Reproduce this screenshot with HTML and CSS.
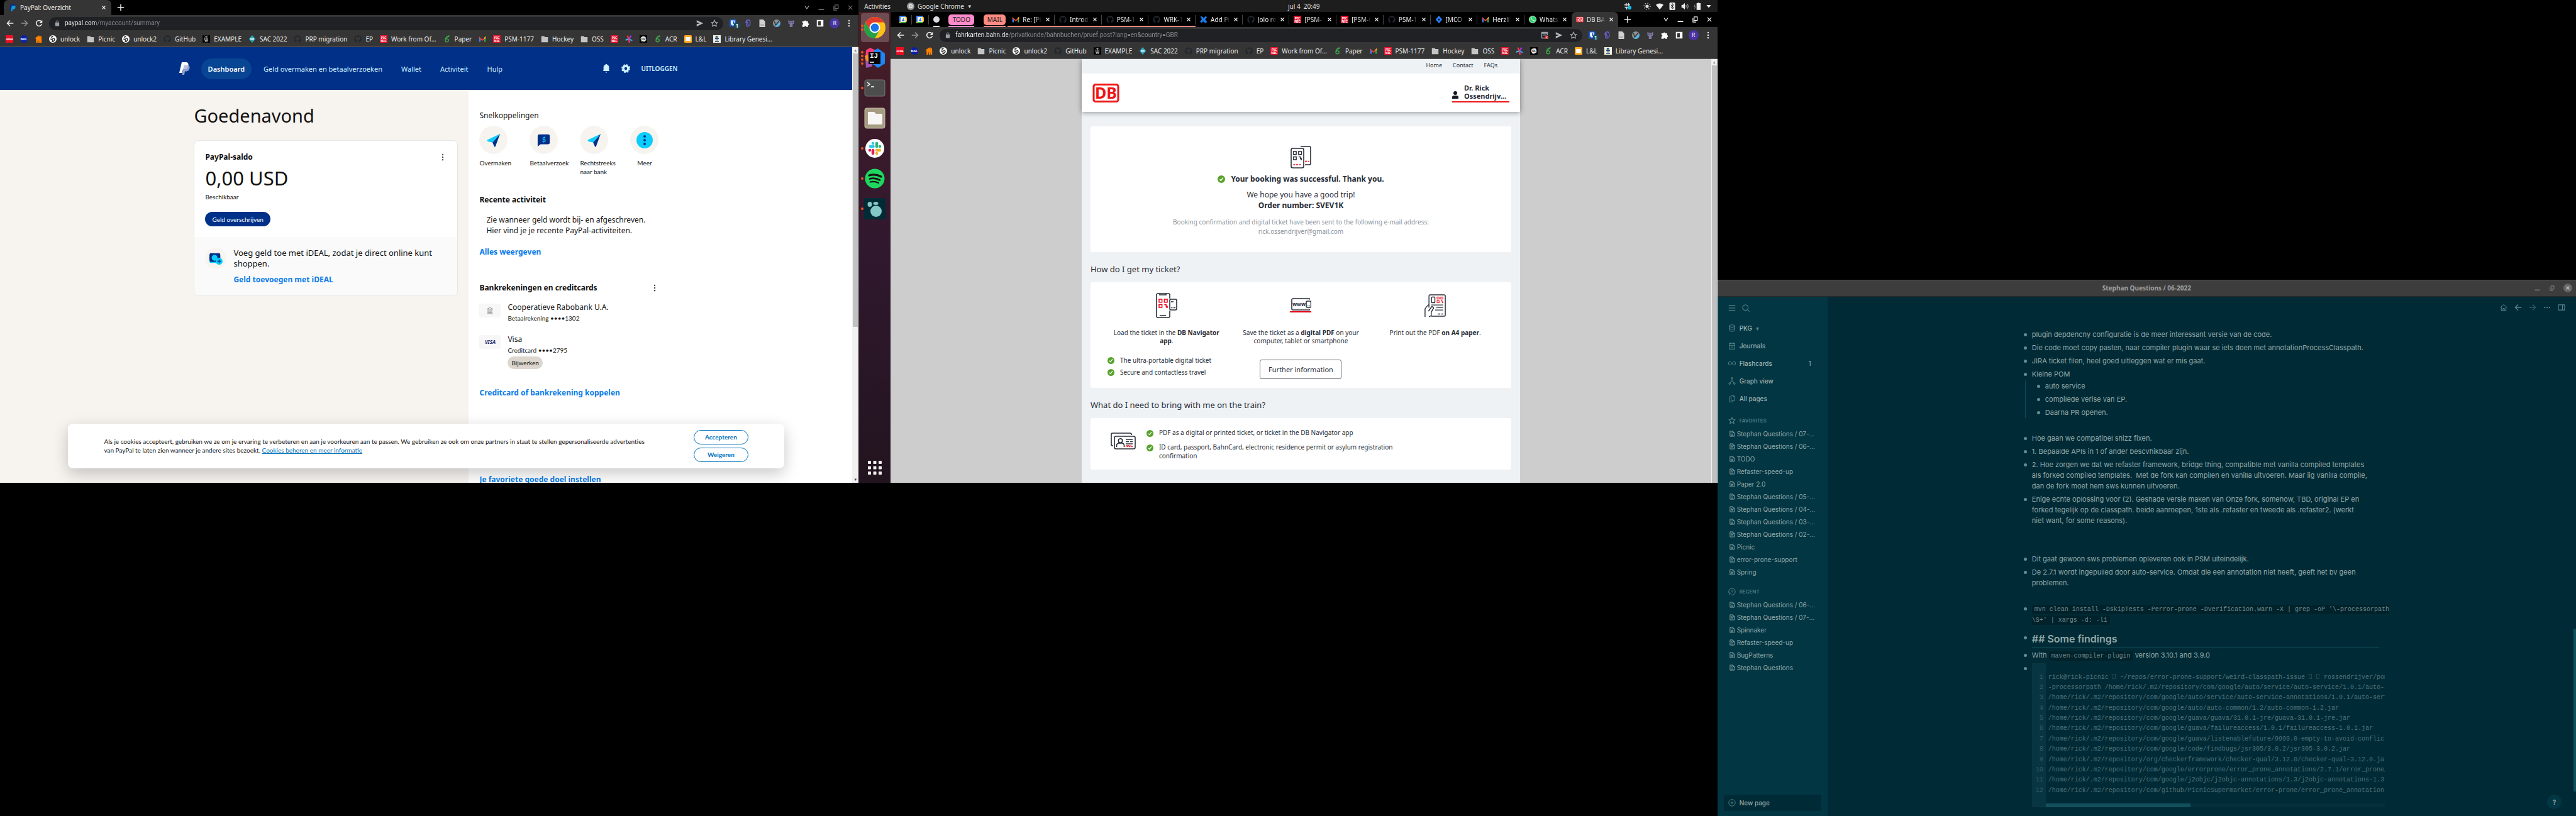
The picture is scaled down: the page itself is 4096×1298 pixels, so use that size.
FILE: index.html
```html
<!DOCTYPE html>
<html lang="nl">
<head>
<meta charset="utf-8">
<title>Desktop</title>
<link rel="stylesheet" href="styles.css">
</head>
<body>
<svg class="sprite" aria-hidden="true">
  <symbol id="back" viewBox="0 0 16 16"><path d="M15 8H2M8 2L2 8l6 6" fill="none" stroke="currentColor" stroke-width="2"/></symbol>
  <symbol id="forward" viewBox="0 0 16 16"><path d="M1 8h13M8 2l6 6-6 6" fill="none" stroke="currentColor" stroke-width="2"/></symbol>
  <symbol id="reload" viewBox="0 0 16 16"><path d="M13 4.2A6 6 0 1 0 14 9.5" fill="none" stroke="currentColor" stroke-width="2"/><path d="M15 1v6.5H8.5z" fill="currentColor"/></symbol>
  <symbol id="lock" viewBox="0 0 16 16"><rect x="3" y="6" width="10" height="9" rx="1" fill="currentColor"/><path d="M5 7V4.5a3 3 0 0 1 6 0V7" fill="none" stroke="currentColor" stroke-width="1.5"/></symbol>
  <symbol id="send" viewBox="0 0 16 16"><path d="M1 1.5L15 8 1 14.5V10l7-2-7-2z" fill="currentColor"/></symbol>
  <symbol id="star" viewBox="0 0 16 16"><path d="M8 1.5l2 4.4 4.7.5-3.5 3.2 1 4.8L8 12l-4.200 2.400 1-4.800L1.300 6.400 6 5.900z" fill="none" stroke="currentColor" stroke-width="1.400"/></symbol>
  <symbol id="popup" viewBox="0 0 16 16"><path d="M9 14H2V2h12v6M2 4h12M5 7.500h7" fill="none" stroke="#9aa0a6" stroke-width="2"/><rect x="9" y="9" width="7" height="7" fill="#e0403a"/><path d="M11 11l3 3m0-3l-3 3" stroke="#fff"/></symbol>
  <symbol id="bitwarden" viewBox="0 0 16 16"><rect width="14" height="15" rx="2" fill="#175ddc"/><path d="M3 2h8v6c0 3-2 4-4 5-2-1-4-2-4-5z" fill="#fff"/><path d="M7 3.500h2.500V8c0 1.500-1 2.500-2.500 3.500z" fill="#175ddc"/></symbol>
  <symbol id="clip" viewBox="0 0 16 16"><path d="M4 8V5.500a4.500 4.500 0 0 1 9 0V10a2.500 2.500 0 0 1-5 0V6.500a1.500 1.500 0 0 0-3 0v4.500a4 4 0 0 0 4 4" fill="none" stroke="#6a63d8" stroke-width="1.700"/></symbol>
  <symbol id="doc" viewBox="0 0 16 16"><path d="M2 0h8l4 4v12H2z" fill="#d0d0d0"/><path d="M4 10h8M4 12.500h8" stroke="#999"/></symbol>
  <symbol id="vim" viewBox="0 0 16 16"><circle cx="8" cy="8" r="8" fill="#8d9498"/><path d="M15 5a8 8 0 0 1-11 10z" fill="#4fb3e8"/><path d="M3 4l3 8L13 3" stroke="#333" stroke-width="2" fill="none"/></symbol>
  <symbol id="cat" viewBox="0 0 16 16"><path d="M2 1l3 2h6l3-2v6c0 2-2 3-3 3v6H5v-6C4 10 2 9 2 7z" fill="#8076a3"/><circle cx="5.500" cy="6" r="1.200" fill="#40395c"/><circle cx="10.500" cy="6" r="1.200" fill="#40395c"/></symbol>
  <symbol id="puzzle" viewBox="0 0 16 16"><path d="M1 4h4a2 2 0 1 1 4 0h4v4a2 2 0 1 1 0 4v3.500H9.500a2 2 0 1 0-4 0H1V11a2 2 0 1 0 0-4z" fill="#fff"/></symbol>
  <symbol id="panel" viewBox="0 0 16 16"><path d="M1 1h14v14H1z" fill="#fff"/><path d="M3.500 3.500h6v9h-6z" fill="#353535"/></symbol>
  <symbol id="menu" viewBox="0 0 16 16"><g fill="currentColor"><circle cx="8" cy="2.500" r="1.600"/><circle cx="8" cy="8" r="1.600"/><circle cx="8" cy="13.500" r="1.600"/></g></symbol>
  <symbol id="chevron" viewBox="0 0 16 16"><path d="M3 4l5 7 5-7" fill="none" stroke="currentColor" stroke-width="2"/></symbol>
  <symbol id="minimize" viewBox="0 0 16 16"><path d="M1 13h14" stroke="currentColor" stroke-width="3"/></symbol>
  <symbol id="restore" viewBox="0 0 16 16"><path d="M6 1.500h8v9H6zM3 4.500v10h8" fill="none" stroke="currentColor" stroke-width="2"/></symbol>
  <symbol id="close" viewBox="0 0 16 16"><path d="M3 3l10 10M13 3L3 13" stroke="currentColor" stroke-width="2.200"/></symbol>
  <symbol id="plus" viewBox="0 0 16 16"><path d="M8 1v14M1 8h14" stroke="currentColor" stroke-width="2"/></symbol>
  <symbol id="paypal-mark" viewBox="0 0 16 16"><path d="M4 0h6c3 0 4 2 3.500 4.500C13 8 10.500 9 8 9H6l-1 5H1.500z" fill="#0a2f86"/><path d="M6.500 4H12c2 .5 2.500 2 2 4-.500 3-2.500 4-5 4H8l-.800 4H4.500z" fill="#159bd7"/></symbol>
  <symbol id="hema" viewBox="0 0 16 16"><path d="M0 0h16v16H0z" fill="#f00d22"/><text x="8" y="10" font-size="5" font-weight="700" text-anchor="middle" fill="#fff">HEMA</text></symbol>
  <symbol id="bol" viewBox="0 0 16 16"><circle cx="8" cy="8" r="8" fill="#0a1fa8"/><text x="8" y="11" font-size="8" font-weight="700" text-anchor="middle" fill="#fff">bol.</text></symbol>
  <symbol id="fork" viewBox="0 0 16 16"><path d="M1 6l6-4 2-2v3l2-3v3l3-2 1 6v9h-3V9l-1 7H8L7 9l-1 7H3V8z" fill="#ff8000"/></symbol>
  <symbol id="globe" viewBox="0 0 16 16"><circle cx="8" cy="8" r="8" fill="#fff"/><path d="M9 1.500L5 4l2 2.500 4 .5 1 3-3.500 4-1.500-.500.500-4L3 8" fill="none" stroke="#353535" stroke-width="2"/></symbol>
  <symbol id="folder" viewBox="0 0 16 16"><path d="M1 2h6l1.500 2H15v11H1z" fill="#c4c4c4"/></symbol>
  <symbol id="github" viewBox="0 0 16 16"><path d="M8 .5a7.500 7.500 0 0 0-2.400 14.600c.4 0 .5-.2.500-.400v-1.500c-2 .4-2.600-.8-2.800-1.500 1 .5 1.500.7 2.800.3.100-.6.300-.900.600-1.200-2-.200-3.500-1-3.500-3.700 0-.800.300-1.500.800-2-.100-.500-.200-1.200.100-2 .8 0 1.500.4 2.100.8a7 7 0 0 1 3.700 0c.6-.4 1.300-.8 2.100-.8.300.8.200 1.500.100 2 .5.500.8 1.200.8 2 0 2.700-1.600 3.500-3.500 3.700.4.400.600.900.600 1.700v2.200c0 .2.100.4.500.400A7.500 7.500 0 0 0 8 .5z" fill="#22272e"/></symbol>
  <symbol id="example" viewBox="0 0 16 16"><path d="M0 0h16v16H0z" fill="#050505"/><path d="M5 1l3 3 3-3M5 5v6h6V5M5 15l3-3 3 3M8 4v6" fill="none" stroke="#ddd" stroke-width="1.300"/></symbol>
  <symbol id="sac" viewBox="0 0 16 16"><path d="M8 0l7 8-7 8-7-8z" fill="#2aa3b8"/><path d="M4 6h8v4H4z" fill="#bfe6ee"/></symbol>
  <symbol id="picnic" viewBox="0 0 16 16"><path d="M0 0h16v16H0z" fill="#e8102c"/><text x="8" y="7.500" font-size="7" font-weight="700" text-anchor="middle" fill="#fff">PIC</text><text x="8" y="14" font-size="7" font-weight="700" text-anchor="middle" fill="#fff">NIC</text></symbol>
  <symbol id="overleaf" viewBox="0 0 16 16"><path d="M13 1C7 2 4 6 4 11a3.500 3.500 0 1 0 4-3.500C6 7 5 9 4.500 10M7 4l5-1" fill="none" stroke="#3da24a" stroke-width="2"/></symbol>
  <symbol id="gmail" viewBox="0 0 16 16"><path d="M1 3v11h3V7z" fill="#4285f4"/><path d="M15 3v11h-3V7z" fill="#34a853"/><path d="M1 3l7 6 7-6v3l-7 6-7-6z" fill="#ea4335"/><path d="M12 5l3-3v4l-3 2z" fill="#fbbc04"/></symbol>
  <symbol id="burst" viewBox="0 0 16 16"><g stroke-width="3" stroke-linecap="round"><path d="M8 8L5 2" stroke="#f33"/><path d="M8 8l4-6" stroke="#a3f"/><path d="M8 8l6 3" stroke="#39f"/><path d="M8 8L2 10" stroke="#2cf"/><path d="M8 8l1 7" stroke="#f36"/></g></symbol>
  <symbol id="ol" viewBox="0 0 16 16"><path d="M0 0h16v16H0z" fill="#050505"/><circle cx="8" cy="8" r="5" fill="#eee" stroke="#eee" stroke-dasharray="1.500 1" stroke-width="2"/><text x="8" y="10.500" font-size="6" font-weight="700" text-anchor="middle" fill="#111">OL</text></symbol>
  <symbol id="slides" viewBox="0 0 16 16"><rect width="16" height="16" rx="2" fill="#ffac28"/><path d="M3 4h10v8H3z" fill="#fff"/></symbol>
  <symbol id="libgen" viewBox="0 0 16 16"><path d="M0 0h16v16H0z" fill="#f1f0df"/><path d="M5 2h5v3H5zM4 6h8v2H4zM5 9h6v2H5zM4 12h8v2H4z" fill="#1b3f78"/></symbol>
  <symbol id="calendar" viewBox="0 0 16 16"><path d="M0 0h12l4 4v8l-4 4H0z" fill="#fbbc04"/><path d="M0 0h13v3H3v10H0z" fill="#4285f4"/><path d="M3 13h10v3H3z" fill="#34a853"/><path d="M3 3h10v10H3z" fill="#fff"/><text x="8" y="12" font-size="10" font-weight="700" text-anchor="middle" fill="#1a73e8">4</text></symbol>
  <symbol id="confluence" viewBox="0 0 16 16"><path d="M1 1l4 1 3 3 4-4 3 2-4 5 4 5-3 3-5-4-4 3-3-3 4-4z" fill="#1f7cf0"/></symbol>
  <symbol id="jira" viewBox="0 0 16 16"><path d="M8 0l7 8-7 8-7-8z" fill="#2684ff"/><path d="M8 5.500L10.500 8 8 10.500 5.500 8z" fill="#050505"/></symbol>
  <symbol id="whatsapp" viewBox="0 0 16 16"><circle cx="8" cy="8" r="7.300" fill="#25d366" stroke="#fff" stroke-width="1.200"/><path d="M5 4c-1 2 2 7 6 7.500l1-2-2-1-1 1C8 9 6.500 7.500 6.300 6.500l.8-1L6.500 4z" fill="#fff"/></symbol>
  <symbol id="db" viewBox="0 0 42 30"><rect x="1.500" y="1.500" width="39" height="27" rx="3" fill="#fff" stroke="#f01414" stroke-width="3"/><text x="21" y="24" font-size="25" font-weight="700" text-anchor="middle" fill="#f01414">DB</text></symbol>
  <symbol id="check" viewBox="0 0 16 16"><circle cx="8" cy="8" r="8" fill="#57a22b"/><path d="M4.500 8.500L7 11l4.500-6" fill="none" stroke="#fff" stroke-width="2"/></symbol>
  <symbol id="page" viewBox="0 0 16 16"><path d="M3 1.500h7l4 4v9H3zM10 1.500v4h4M5.500 8.500h6M5.500 11.500h6M5.500 5.500h2" fill="none" stroke="currentColor" stroke-width="1.500"/></symbol>
  <symbol id="plane" viewBox="0 0 24 24"><path d="M23 1L1 11.500C0 12 1 14 2.500 14.500L10 16z" fill="#0ccdfb"/><path d="M23 1L10 16l3 7c.600 1 1.400 1 2 0z" fill="#012f86"/></symbol>
  <symbol id="qr" viewBox="0 0 16 16"><path d="M1 1h5v5H1zM10 1h5v5h-5zM1 10h5v5H1zM10 10h3v3h2v2h-2" fill="none" stroke="currentColor" stroke-width="1.600"/></symbol>
</svg>

<main class="desktop">

<section class="screen">
  <div class="browser inactive">
    <header class="tabstrip">
      <a class="tab tab-wide active" href="#"><svg><use href="#paypal-mark"/></svg><span>PayPal: Overzicht</span><svg class="x"><use href="#close"/></svg></a>
      <button class="newtab" aria-label="Nieuw tabblad"><svg><use href="#plus"/></svg></button>
      <div class="wincontrols"><svg class="bright"><use href="#chevron"/></svg><svg><use href="#minimize"/></svg><svg><use href="#restore"/></svg><svg><use href="#close"/></svg></div>
    </header>
    <div class="toolbar">
      <div class="navbuttons"><svg><use href="#back"/></svg><svg class="off"><use href="#forward"/></svg><svg><use href="#reload"/></svg></div>
      <label class="omnibox"><svg><use href="#lock"/></svg><input class="url url-short" aria-label="Adres" value="paypal.com/myaccount/summary"><svg class="act"><use href="#send"/></svg><svg class="act"><use href="#star"/></svg></label>
      <div class="extensions"><span class="ext-badged"><svg><use href="#bitwarden"/></svg><b>1</b></span><svg><use href="#clip"/></svg><svg><use href="#doc"/></svg><svg><use href="#vim"/></svg><svg><use href="#cat"/></svg><svg><use href="#puzzle"/></svg><svg><use href="#panel"/></svg><span class="avatar">R</span><svg><use href="#menu"/></svg></div>
    </div>
    <nav class="bookmarks">
      <a href="#" aria-label="HEMA"><svg><use href="#hema"/></svg></a><a href="#" aria-label="bol"><svg><use href="#bol"/></svg></a><a href="#" aria-label="Thuisbezorgd"><svg><use href="#fork"/></svg></a><a href="#"><svg><use href="#globe"/></svg>unlock</a><a href="#"><svg><use href="#folder"/></svg>Picnic</a><a href="#"><svg><use href="#globe"/></svg>unlock2</a><a href="#"><svg><use href="#github"/></svg>GitHub</a><a href="#"><svg><use href="#example"/></svg>EXAMPLE</a><a href="#"><svg><use href="#sac"/></svg>SAC 2022</a><a href="#"><svg><use href="#github"/></svg>PRP migration</a><a href="#"><svg><use href="#github"/></svg>EP</a><a href="#"><svg><use href="#picnic"/></svg>Work from Of…</a><a href="#"><svg><use href="#overleaf"/></svg>Paper</a><a href="#" aria-label="Gmail"><svg><use href="#gmail"/></svg></a><a href="#"><svg><use href="#picnic"/></svg>PSM-1177</a><a href="#"><svg><use href="#folder"/></svg>Hockey</a><a href="#"><svg><use href="#folder"/></svg>OSS</a><a href="#" aria-label="Picnic"><svg><use href="#picnic"/></svg></a><a href="#" aria-label="Burst"><svg><use href="#burst"/></svg></a><a href="#" aria-label="OL"><svg><use href="#ol"/></svg></a><a href="#"><svg><use href="#overleaf"/></svg>ACR</a><a href="#"><svg><use href="#slides"/></svg>L&amp;L</a><a href="#"><svg><use href="#libgen"/></svg>Library Genesi…</a>
    </nav>
    <div class="viewport">
      <div class="paypal">
        <header class="pp-header">
          <svg class="pp-logo" viewBox="0 0 17 20"><path d="M4 0h6c4 0 5 2 4.500 5.500C14 9 11.500 11 8 11H6l-1.500 6H0z" fill="#fff"/><path d="M7.500 4.500h5C16 5 17 7 16.500 9.500c-.500 3-3 5-6 5H9L8 20H4.500z" fill="#a9b7dc" fill-opacity=".85"/></svg>
          <nav class="pp-nav"><a class="on" href="#">Dashboard</a><a href="#">Geld overmaken en betaalverzoeken</a><a href="#">Wallet</a><a href="#">Activiteit</a><a href="#">Hulp</a></nav>
          <div class="pp-tools">
            <svg viewBox="0 0 14 16"><path d="M2 11.500V6a5 5 0 0 1 3.500-5 1.500 1.500 0 0 1 3 0A5 5 0 0 1 12 6v5.500l1 1H1zM5 14h4l-2 2z" fill="#cdf1ff"/></svg>
            <svg viewBox="0 0 16 16"><circle cx="8" cy="8" r="4.500" fill="none" stroke="#cdf1ff" stroke-width="4"/><circle cx="8" cy="8" r="7" fill="none" stroke="#cdf1ff" stroke-width="2" stroke-dasharray="3.200 2.300"/></svg>
            <a href="#">UITLOGGEN</a>
          </div>
        </header>
        <div class="pp-body">
          <section class="pp-left">
            <h1>Goedenavond</h1>
            <article class="pp-card">
              <div class="pp-balance">
                <div class="pp-row"><h2>PayPal-saldo</h2><button class="dots" aria-label="Meer opties"><svg><use href="#menu"/></svg></button></div>
                <p class="pp-amount">0,00 USD</p>
                <p class="pp-small">Beschikbaar</p>
                <button class="pp-primary">Geld overschrijven</button>
              </div>
              <div class="pp-ideal">
                <span class="pp-disc"><svg viewBox="0 0 24 24"><path d="M3 4h16v16H3c-1.500 0-2-3-2-8s.5-8 2-8z" fill="#0ccdfb"/><path d="M3 3h15c2 0 2 3 2 7s0 8-2 8H3c-1.500 0-2-4-2-8s.5-7 2-7z" fill="#012f86"/><circle cx="10" cy="11" r="5" fill="#0ccdfb"/><circle cx="18" cy="17" r="6" fill="#0ccdfb"/><path d="M18 14v6M15 17h6" stroke="#012f86" stroke-width="1.600"/></svg></span>
                <div><p>Voeg geld toe met iDEAL, zodat je direct online kunt<br>shoppen.</p><a class="pp-link" href="#">Geld toevoegen met iDEAL</a></div>
              </div>
            </article>
          </section>
          <aside class="pp-right">
            <h2 class="plain">Snelkoppelingen</h2>
            <div class="pp-quick">
              <a href="#"><span><svg><use href="#plane"/></svg></span>Overmaken</a>
              <a href="#"><span><svg viewBox="0 0 24 24"><path d="M4 2h15a3 3 0 0 1 3 3v11a3 3 0 0 1-3 3H6l-5 4V5a3 3 0 0 1 3-3z" fill="#012f86"/><text x="12" y="15" font-size="12" text-anchor="middle" fill="#0ccdfb">$</text></svg></span>Betaalverzoek</a>
              <a href="#"><span><svg><use href="#plane"/></svg></span>Rechtstreeks<br>naar bank</a>
              <a class="centred" href="#"><span><svg class="full" viewBox="0 0 24 24"><circle cx="12" cy="12" r="12" fill="#0ccdfb"/><g fill="#012f86"><circle cx="12" cy="6.500" r="1.800"/><circle cx="12" cy="12" r="1.800"/><circle cx="12" cy="17.500" r="1.800"/></g></svg></span>Meer</a>
            </div>
            <h2>Recente activiteit</h2>
            <p class="pp-activity">Zie wanneer geld wordt bij- en afgeschreven.<br>Hier vind je je recente PayPal-activiteiten.</p>
            <a class="pp-link" href="#">Alles weergeven</a>
            <div class="pp-row pp-bank-head"><h2>Bankrekeningen en creditcards</h2><button class="dots" aria-label="Meer opties"><svg><use href="#menu"/></svg></button></div>
            <div class="pp-account"><span class="pp-thumb"><svg viewBox="0 0 16 16"><path d="M2 5l6-4 6 4zM4 6v6M6.500 6v6M9.500 6v6M12 6v6M2 14.500h12M3 12.500h10" fill="none" stroke="#888" stroke-width="1.200"/></svg></span><div><p>Cooperatieve Rabobank U.A.</p><small>Betaalrekening ••••1302</small></div></div>
            <div class="pp-account"><span class="pp-thumb visa">VISA</span><div><p>Visa</p><small>Creditcard ••••2795</small><button class="pp-chip">Bijwerken</button></div></div>
            <a class="pp-link pp-couple" href="#">Creditcard of bankrekening koppelen</a>
            <a class="pp-link pp-charity" href="#">Je favoriete goede doel instellen</a>
          </aside>
        </div>
        <div class="pp-cookies">
          <p>Als je cookies accepteert, gebruiken we ze om je ervaring te verbeteren en aan je voorkeuren aan te passen. We gebruiken ze ook om onze partners in staat te stellen gepersonaliseerde advertenties<br>van PayPal te laten zien wanneer je andere sites bezoekt. <a href="#">Cookies beheren en meer informatie</a></p>
          <div><button>Accepteren</button><button>Weigeren</button></div>
        </div>
      </div>
      <div class="scrollbar"><i>▲</i><span class="thumb thumb-long"></span><i class="down">▼</i></div>
    </div>
  </div>
</section>

<section class="screen ubuntu">
  <header class="panel">
    <span class="activities">Activities</span>
    <span class="appmenu"><svg viewBox="0 0 16 16"><circle cx="8" cy="8" r="8" fill="#9a9a9a"/><circle cx="8" cy="8" r="3.500" fill="#bbb" stroke="#eee" stroke-width="1.500"/></svg>Google Chrome <i>▼</i></span>
    <time>jul 4&nbsp; 20:49</time>
    <span class="tray">
      <svg viewBox="0 0 16 16"><path d="M5 1v6M10 1v6M1 5h12M2 10h6M6 9v6" stroke="#ddd" stroke-width="2"/><circle cx="12" cy="11" r="4" fill="#0cc3ee"/></svg>
      <svg class="gap" viewBox="0 0 16 16"><circle cx="8" cy="8" r="3.500" fill="#ddd"/><circle cx="8" cy="8" r="6.500" fill="none" stroke="#ddd" stroke-width="2" stroke-dasharray="1.500 3.600"/></svg>
      <svg viewBox="0 0 16 16"><path d="M0 5a12 12 0 0 1 16 0L8 15z" fill="#eee"/></svg>
      <svg viewBox="0 0 16 16"><rect x="2" width="12" height="16" rx="2" fill="#eee"/><path d="M5 5l6 6-3 3V2l3 3-6 6" fill="none" stroke="#1d1d1d" stroke-width="1.300"/></svg>
      <svg viewBox="0 0 16 16"><path d="M1 5h3l4-4v14l-4-4H1z" fill="#eee"/><path d="M10 5q2 3 0 6M13 3q4 5 0 10" fill="none" stroke="#aaa" stroke-width="1.500"/></svg>
      <svg viewBox="0 0 16 16"><path d="M7 2h7v13H7zM9 1h3" fill="#eee" stroke="#eee" stroke-width="1.500"/><path d="M3 4L1 9h3l-2 4" stroke="#aaa" fill="none"/></svg>
      <svg class="small" viewBox="0 0 16 16"><path d="M1 4h14l-7 9z" fill="#eee"/></svg>
    </span>
  </header>
  <div class="session">
    <nav class="dock">
      <a class="on" href="#" aria-label="Google Chrome"><i class="run"><b></b><b></b></i><svg viewBox="0 0 34 34"><circle cx="17" cy="17" r="17" fill="#fbc116"/><path d="M17 17v-8.500h14.700A17 17 0 0 0 2.300 8.500l7.400 12.700z" fill="#e33b2e"/><path d="M2.300 8.500A17 17 0 0 0 17 34l7.400-12.800L17 17l-7.300 4.200z" fill="#24a148"/><circle cx="17" cy="17" r="8.500" fill="#fff"/><circle cx="17" cy="17" r="6.500" fill="#1a73e8"/></svg></a>
      <a href="#" aria-label="IntelliJ IDEA"><i class="run"><b></b><b></b><b></b><b></b></i><svg viewBox="0 0 34 34"><path d="M3 5l6-4 10 4-1 14-12 6-4-7z" fill="#fc3a75"/><path d="M2 18l6-5 8 8-4 10-9 2z" fill="#a154b5"/><path d="M1 14l5-2 2 12-5-3z" fill="#fc8f2e"/><path d="M22 2l11 8v16l-11 7-8-6 2-22z" fill="#1f85f5"/><rect x="7" y="8" width="19" height="19" fill="#050505"/><text x="9" y="17" font-family="Liberation Mono" font-size="11" font-weight="700" fill="#fff">IJ</text><path d="M9 24h7" stroke="#fff" stroke-width="1.500"/></svg></a>
      <a href="#" aria-label="Terminal"><i class="run"><b></b></i><svg viewBox="0 0 34 34"><rect x="1" y="4" width="32" height="26" rx="3" fill="#4d4d4d" stroke="#777"/><path d="M5 8l4 3-4 3M11 15h5" stroke="#fff" stroke-width="1.500" fill="none"/></svg></a>
      <a href="#" aria-label="Files"><svg viewBox="0 0 34 34"><rect x="1" y="1" width="32" height="32" rx="3" fill="#a69b83" stroke="#c8bfa9"/><path d="M6 7h10l3 3h10v17H6z" fill="#f7f6f4"/></svg></a>
      <a href="#" aria-label="Slack"><i class="run"><b></b></i><svg viewBox="0 0 34 34"><circle cx="17" cy="17" r="15" fill="#fff"/><g stroke-width="4.500" stroke-linecap="round"><path d="M14 9v0M10 14h4.500" stroke="#36c5f0"/><path d="M20 9v5M25 14h0" stroke="#2eb67d"/><path d="M20 20h5M20 25v0" stroke="#ecb22e"/><path d="M14 20v5M9 20h0" stroke="#e01e5a"/></g></svg></a>
      <a href="#" aria-label="Spotify"><i class="run"><b></b></i><svg viewBox="0 0 34 34"><circle cx="17" cy="17" r="15.500" fill="#1ed760"/><g fill="none" stroke="#191414" stroke-linecap="round"><path d="M8 12q10-3 19 2" stroke-width="3.200"/><path d="M9 17.500q8-2.500 16 2" stroke-width="2.600"/><path d="M9.500 22.500q7-2 13.500 1.500" stroke-width="2.200"/></g></svg></a>
      <a href="#" aria-label="Logseq"><i class="run"><b></b></i><svg viewBox="0 0 34 34"><path d="M0 0h34v34H0z" fill="#002b36"/><circle cx="19" cy="21" r="9" fill="#85c8c8"/><ellipse cx="9" cy="10" rx="3.500" ry="4" fill="#85c8c8"/><ellipse cx="18.500" cy="8.500" rx="4" ry="2.500" fill="#85c8c8"/></svg></a>
      <button class="appgrid" aria-label="Show Applications"><svg viewBox="0 0 22 22"><g fill="#eee"><rect width="5" height="5" rx="1"/><rect x="8.500" width="5" height="5" rx="1"/><rect x="17" width="5" height="5" rx="1"/><rect y="8.500" width="5" height="5" rx="1"/><rect x="8.500" y="8.500" width="5" height="5" rx="1"/><rect x="17" y="8.500" width="5" height="5" rx="1"/><rect y="17" width="5" height="5" rx="1"/><rect x="8.500" y="17" width="5" height="5" rx="1"/><rect x="17" y="17" width="5" height="5" rx="1"/></g></svg></button>
    </nav>
    <div class="browser">
      <header class="tabstrip">
        <div class="pinned"><svg><use href="#calendar"/></svg><i class="sep"></i><svg><use href="#calendar"/></svg><i class="sep"></i><i class="groupdot"></i><span class="group todo">TODO</span></div>
        <span class="group mail">MAIL</span>
        <div class="tabs">
          <a class="tab mailed" href="#"><svg><use href="#gmail"/></svg><span>Re: [Pi</span><svg class="x"><use href="#close"/></svg></a>
          <a class="tab mailed" href="#"><svg><use href="#github"/></svg><span>Introd</span><svg class="x"><use href="#close"/></svg></a>
          <a class="tab mailed" href="#"><svg><use href="#github"/></svg><span>PSM-1</span><svg class="x"><use href="#close"/></svg></a>
          <a class="tab mailed" href="#"><svg><use href="#github"/></svg><span>WRK-1</span><svg class="x"><use href="#close"/></svg></a>
          <a class="tab" href="#"><svg><use href="#confluence"/></svg><span>Add Pi</span><svg class="x"><use href="#close"/></svg></a>
          <a class="tab" href="#"><svg><use href="#github"/></svg><span>Jolo ro</span><svg class="x"><use href="#close"/></svg></a>
          <a class="tab" href="#"><svg><use href="#picnic"/></svg><span>[PSM-1</span><svg class="x"><use href="#close"/></svg></a>
          <a class="tab" href="#"><svg><use href="#picnic"/></svg><span>[PSM-6</span><svg class="x"><use href="#close"/></svg></a>
          <a class="tab" href="#"><svg><use href="#github"/></svg><span>PSM-1</span><svg class="x"><use href="#close"/></svg></a>
          <a class="tab" href="#"><svg><use href="#jira"/></svg><span>[MCO</span><svg class="x"><use href="#close"/></svg></a>
          <a class="tab" href="#"><svg><use href="#gmail"/></svg><span>Herzli</span><svg class="x"><use href="#close"/></svg></a>
          <a class="tab last" href="#"><svg><use href="#whatsapp"/></svg><span>Whats</span><svg class="x"><use href="#close"/></svg></a>
          <a class="tab active" href="#"><svg class="dbfav"><use href="#db"/></svg><span>DB BA</span><svg class="x"><use href="#close"/></svg></a>
        </div>
        <button class="newtab" aria-label="New tab"><svg><use href="#plus"/></svg></button>
        <div class="wincontrols"><svg><use href="#chevron"/></svg><svg><use href="#minimize"/></svg><svg><use href="#restore"/></svg><svg><use href="#close"/></svg></div>
      </header>
      <div class="toolbar">
        <div class="navbuttons"><svg><use href="#back"/></svg><svg class="off"><use href="#forward"/></svg><svg><use href="#reload"/></svg></div>
        <label class="omnibox"><svg><use href="#lock"/></svg><input class="url url-long" aria-label="Address" value="fahrkarten.bahn.de/privatkunde/bahnbuchen/pruef.post?lang=en&amp;country=GBR"><svg class="act"><use href="#popup"/></svg><svg class="act"><use href="#send"/></svg><svg class="act"><use href="#star"/></svg></label>
        <div class="extensions"><span class="ext-badged"><svg><use href="#bitwarden"/></svg><b>1</b></span><svg><use href="#clip"/></svg><svg><use href="#doc"/></svg><svg><use href="#vim"/></svg><svg><use href="#cat"/></svg><svg><use href="#puzzle"/></svg><svg><use href="#panel"/></svg><span class="avatar">R</span><svg><use href="#menu"/></svg></div>
      </div>
      <nav class="bookmarks">
        <a href="#" aria-label="HEMA"><svg><use href="#hema"/></svg></a><a href="#" aria-label="bol"><svg><use href="#bol"/></svg></a><a href="#" aria-label="Thuisbezorgd"><svg><use href="#fork"/></svg></a><a href="#"><svg><use href="#globe"/></svg>unlock</a><a href="#"><svg><use href="#folder"/></svg>Picnic</a><a href="#"><svg><use href="#globe"/></svg>unlock2</a><a href="#"><svg><use href="#github"/></svg>GitHub</a><a href="#"><svg><use href="#example"/></svg>EXAMPLE</a><a href="#"><svg><use href="#sac"/></svg>SAC 2022</a><a href="#"><svg><use href="#github"/></svg>PRP migration</a><a href="#"><svg><use href="#github"/></svg>EP</a><a href="#"><svg><use href="#picnic"/></svg>Work from Of…</a><a href="#"><svg><use href="#overleaf"/></svg>Paper</a><a href="#" aria-label="Gmail"><svg><use href="#gmail"/></svg></a><a href="#"><svg><use href="#picnic"/></svg>PSM-1177</a><a href="#"><svg><use href="#folder"/></svg>Hockey</a><a href="#"><svg><use href="#folder"/></svg>OSS</a><a href="#" aria-label="Picnic"><svg><use href="#picnic"/></svg></a><a href="#" aria-label="Burst"><svg><use href="#burst"/></svg></a><a href="#" aria-label="OL"><svg><use href="#ol"/></svg></a><a href="#"><svg><use href="#overleaf"/></svg>ACR</a><a href="#"><svg><use href="#slides"/></svg>L&amp;L</a><a href="#"><svg><use href="#libgen"/></svg>Library Genesi…</a>
      </nav>
      <div class="viewport">
        <div class="bahn">
          <div class="db-column">
            <header class="db-header">
              <nav><a href="#">Home</a><a href="#">Contact</a><a href="#">FAQs</a></nav>
              <div class="db-brand">
                <svg class="db-logo"><use href="#db"/></svg>
                <a class="db-user" href="#"><svg viewBox="0 0 10 12"><circle cx="5" cy="3" r="3" fill="#131821"/><path d="M0 12V9.500Q0 7 3 7h4q3 0 3 2.500V12z" fill="#131821"/></svg><span>Dr. Rick<br>Ossendrijv...</span></a>
              </div>
            </header>
            <article class="db-card db-success">
              <svg viewBox="0 0 33 36"><g fill="none" stroke="#282d37" stroke-width="1.600"><rect x="1" y="4" width="20" height="31" rx="2.500"/><path d="M16 1h14a2 2 0 0 1 2 2v25a2 2 0 0 1-2 2h-7"/></g><path d="M4.500 30h13M23 24.500h7" stroke="#ec0016" stroke-width="1.600" stroke-dasharray="3 1.500"/><g color="#282d37"><use href="#qr" x="3.500" y="8" width="15" height="15"/></g></svg>
              <h3><svg><use href="#check"/></svg>Your booking was successful. Thank you.</h3>
              <p>We hope you have a good trip!<br><b>Order number: SVEV1K</b></p>
              <p class="muted">Booking confirmation and digital ticket have been sent to the following e-mail address:<br>rick.ossendrijver@gmail.com</p>
            </article>
            <h2>How do I get my ticket?</h2>
            <article class="db-card db-options">
              <div>
                <svg viewBox="0 0 34 40"><g fill="none" stroke="#282d37" stroke-width="1.600"><path d="M22 9V3a2 2 0 0 0-2-2H3a2 2 0 0 0-2 2v34a2 2 0 0 0 2 2h17a2 2 0 0 0 2-2v-9M6 1v2h10V1M6 36h10"/><rect x="22" y="10" width="11" height="17" rx="2"/><path d="M24 14h4"/><path d="M24 23.500h8" stroke-dasharray="1.500 1"/></g><g color="#ec0016"><use href="#qr" x="4" y="9" width="15" height="15"/></g></svg>
                <p>Load the ticket in the <b>DB Navigator<br>app</b>.</p>
                <ul class="checks"><li><svg><use href="#check"/></svg>The ultra-portable digital ticket</li><li><svg><use href="#check"/></svg>Secure and contactless travel</li></ul>
              </div>
              <div>
                <svg viewBox="0 0 34 40"><g fill="none" stroke="#282d37" stroke-width="1.600"><path d="M31 10.500V9H5a2 2 0 0 0-2 2v14a2 2 0 0 0 2 2h26v-1.500"/><rect x="26" y="13" width="7.500" height="10" rx="1.500"/><path d="M28 20.500h4" stroke-dasharray="1.300 1"/></g><text x="14.500" y="21" font-size="8" font-weight="700" text-anchor="middle" fill="#282d37">www</text><path d="M0 30h34" stroke="#ec0016" stroke-width="1.800"/></svg>
                <p>Save the ticket as a <b>digital PDF</b> on your<br>computer, tablet or smartphone</p>
                <button>Further information</button>
              </div>
              <div>
                <svg viewBox="0 0 38 40"><g fill="none" stroke="#282d37" stroke-width="1.600"><path d="M8 18V3a2 2 0 0 1 2-2h25a2 2 0 0 1 2 2v34a2 2 0 0 1-2 2H12"/><rect x="12.500" y="5" width="6" height="10" rx="1"/><path d="M12 19h21M21 23h12M19 28h14M24 35h4M30 35h3M1 40V26q3-5 7-8v6M7 30l6-8q3 0 3 3l-4 7v6l-4 2"/></g><g color="#ec0016"><use href="#qr" x="21.500" y="4" width="12" height="12"/></g></svg>
                <p>Print out the PDF <b>on A4 paper</b>.</p>
              </div>
            </article>
            <h2>What do I need to bring with me on the train?</h2>
            <article class="db-card db-bring">
              <svg viewBox="0 0 40 27"><g fill="none" stroke="#282d37" stroke-width="1.600"><path d="M4 21H3a2 2 0 0 1-2-2V3a2 2 0 0 1 2-2h28a2 2 0 0 1 2 2v1"/><rect x="6" y="6" width="33" height="20" rx="2.500"/><circle cx="15.500" cy="13" r="3.200"/><path d="M9.500 23v-2q0-4 3.500-4h5q3.500 0 3.500 4v2M24 11h11M24 14.500h5M31 14.500h4M24 18h11"/></g><path d="M24 22.500l2-2 1 2 2-2 1 2 2-1.500 1 1h2" fill="none" stroke="#ec0016" stroke-width="1.300"/></svg>
              <ul class="checks"><li><svg><use href="#check"/></svg>PDF as a digital or printed ticket, or ticket in the DB Navigator app</li><li><svg><use href="#check"/></svg><span>ID card, passport, BahnCard, electronic residence permit or asylum registration<br>confirmation</span></li></ul>
            </article>
          </div>
        </div>
        <div class="scrollbar"><i>▲</i><span class="thumb thumb-full"></span></div>
      </div>
    </div>
  </div>
</section>

<section class="screen laptop">
  <header class="titlebar"><h1>Stephan Questions / 06-2022</h1><div class="wm"><svg><use href="#minimize"/></svg><svg><use href="#restore"/></svg><svg class="wm-close"><use href="#close"/></svg></div></header>
  <div class="logseq">
    <aside class="ls-side">
      <div class="ls-tools">
        <svg viewBox="0 0 16 16"><path d="M1 2.500h14M1 8h14M1 13.500h14" stroke="currentColor" stroke-width="1.500"/></svg>
        <svg viewBox="0 0 16 16"><circle cx="7" cy="7" r="5.800" fill="none" stroke="currentColor" stroke-width="1.400"/><path d="M11 11l4.500 4.500" stroke="currentColor" stroke-width="1.400"/></svg>
      </div>
      <nav class="ls-nav">
        <a href="#"><svg viewBox="0 0 16 16"><g fill="none" stroke="currentColor" stroke-width="1.300"><ellipse cx="8" cy="3.500" rx="6" ry="2.500"/><path d="M2 3.500v9c0 3 12 3 12 0v-9M2 8c0 3 12 3 12 0"/></g></svg>PKG <i>▾</i></a>
        <a href="#"><svg viewBox="0 0 16 16"><path d="M2 3h12v12H2zM2 7h12M5 1v3M11 1v3M8 9v4" fill="none" stroke="currentColor" stroke-width="1.300"/></svg>Journals</a>
        <a href="#"><svg viewBox="0 0 16 16"><path d="M8 8C6 5 5 4.500 4 4.500a3.500 3.500 0 0 0 0 7C5 11.500 6 11 8 8s3-3.500 4-3.500a3.500 3.500 0 0 1 0 7C11 11.500 10 11 8 8z" fill="none" stroke="currentColor" stroke-width="1.300"/></svg>Flashcards<em>1</em></a>
        <a href="#"><svg viewBox="0 0 16 16"><g fill="none" stroke="currentColor" stroke-width="1.300"><circle cx="8" cy="2.500" r="1.800"/><circle cx="3" cy="13.500" r="1.800"/><circle cx="13" cy="13.500" r="1.800"/><path d="M8 4.500V8l-4.500 4M8 8l4.500 4"/></g></svg>Graph view</a>
        <a href="#"><svg viewBox="0 0 16 16"><path d="M6 1h5l3 3v8H6zM11 1v3h3M6 4H3v11h7v-3" fill="none" stroke="currentColor" stroke-width="1.300"/></svg>All pages</a>
      </nav>
      <h2><svg><use href="#star"/></svg>Favorites</h2>
      <ul class="ls-pages">
        <li><a href="#"><svg><use href="#page"/></svg>Stephan Questions / 07-...</a></li><li><a href="#"><svg><use href="#page"/></svg>Stephan Questions / 06-...</a></li><li><a href="#"><svg><use href="#page"/></svg>TODO</a></li><li><a href="#"><svg><use href="#page"/></svg>Refaster-speed-up</a></li><li><a href="#"><svg><use href="#page"/></svg>Paper 2.0</a></li><li><a href="#"><svg><use href="#page"/></svg>Stephan Questions / 05-...</a></li><li><a href="#"><svg><use href="#page"/></svg>Stephan Questions / 04-...</a></li><li><a href="#"><svg><use href="#page"/></svg>Stephan Questions / 03-...</a></li><li><a href="#"><svg><use href="#page"/></svg>Stephan Questions / 02-...</a></li><li><a href="#"><svg><use href="#page"/></svg>Picnic</a></li><li><a href="#"><svg><use href="#page"/></svg>error-prone-support</a></li><li><a href="#"><svg><use href="#page"/></svg>Spring</a></li>
      </ul>
      <h2><svg viewBox="0 0 16 16"><path d="M2 12A7 7 0 1 1 6 15M2 15v-4h4M8 4v4l2.500 2" fill="none" stroke="currentColor" stroke-width="1.300"/></svg>Recent</h2>
      <ul class="ls-pages">
        <li><a href="#"><svg><use href="#page"/></svg>Stephan Questions / 06-...</a></li><li><a href="#"><svg><use href="#page"/></svg>Stephan Questions / 07-...</a></li><li><a href="#"><svg><use href="#page"/></svg>Spinnaker</a></li><li><a href="#"><svg><use href="#page"/></svg>Refaster-speed-up</a></li><li><a href="#"><svg><use href="#page"/></svg>BugPatterns</a></li><li><a href="#"><svg><use href="#page"/></svg>Stephan Questions</a></li>
      </ul>
      <button class="ls-new"><svg viewBox="0 0 16 16"><circle cx="8" cy="8" r="7" fill="none" stroke="currentColor" stroke-width="1.200"/><path d="M8 5v6M5 8h6" stroke="currentColor" stroke-width="1.200"/></svg>New page</button>
    </aside>
    <div class="ls-main">
      <header class="ls-head">
        <svg viewBox="0 0 16 16"><path d="M1 8l7-6 7 6M3 7v8h10V7M6.500 15v-5h3v5" fill="none" stroke="currentColor" stroke-width="1.300"/></svg>
        <svg><use href="#back"/></svg><svg class="off"><use href="#forward"/></svg>
        <svg viewBox="0 0 16 16"><g fill="currentColor"><circle cx="3" cy="8" r="1.500"/><circle cx="8" cy="8" r="1.500"/><circle cx="13" cy="8" r="1.500"/></g></svg>
        <svg viewBox="0 0 16 16"><path d="M1.500 2.500h13v11h-13zM10 2.500v11" fill="none" stroke="currentColor" stroke-width="1.400"/></svg>
      </header>
      <ul class="outline">
        <li><div>plugin depdencny configuratie is de meer interessant versie van de code.</div></li>
        <li><div>Die code moet copy pasten, naar compiler plugin waar se iets doen met annotationProcessClasspath.</div></li>
        <li><div>JIRA ticket filen, heel goed uitleggen wat er mis gaat.</div></li>
        <li><div>Kleine POM
          <ul class="outline nested"><li><div>auto service</div></li><li><div>compilede verise van EP.</div></li><li><div>Daarna PR openen.</div></li></ul></div></li>
        <li class="apart"><div>Hoe gaan we compatibel shizz fixen.</div></li>
        <li><div>1. Bepaalde APIs in 1 of ander bescvhikbaar zijn.</div></li>
        <li><div>2. Hoe zorgen we dat we refaster framework, bridge thing, compatible met vanilla compiled templates<br>als forked compiled templates.&nbsp; Met de fork kan compilen en vanilla uitvoeren. Maar iig vanilla compile,<br>dan de fork moet hem sws kunnen uitvoeren.</div></li>
        <li><div>Enige echte oplossing voor (2). Geshade versie maken van Onze fork, somehow, TBD, original EP en<br>forked tegelijk op de classpath. beide aanroepen, 1ste als .refaster en tweede als .refaster2. (werkt<br>niet want, for some reasons).</div></li>
        <li class="apart far"><div>Dit gaat gewoon sws problemen opleveren ook in PSM uiteindelijk.</div></li>
        <li><div>De 2.7.1 wordt ingepulled door auto-service. Omdat die een annotation niet heeft, geeft het bv geen<br>problemen.</div></li>
        <li class="apart"><div><code>mvn clean install -DskipTests -Perror-prone -Dverification.warn -X | grep -oP '\-processorpath<br>\S+' | xargs -d: -l1</code></div></li>
        <li class="title"><h2>## Some findings</h2></li>
        <li><div>With <code>maven-compiler-plugin</code> version 3.10.1 and 3.9.0</div></li>
        <li><div class="codeblock">
          <ol>
            <li>rick@rick-picnic <i></i> ~/repos/error-prone-support/weird-classpath-issue <i></i> <i></i> rossendrijver/pom</li>
            <li>-processorpath /home/rick/.m2/repository/com/google/auto/service/auto-service/1.0.1/auto-s</li>
            <li>/home/rick/.m2/repository/com/google/auto/service/auto-service-annotations/1.0.1/auto-serv</li>
            <li>/home/rick/.m2/repository/com/google/auto/auto-common/1.2/auto-common-1.2.jar</li>
            <li>/home/rick/.m2/repository/com/google/guava/guava/31.0.1-jre/guava-31.0.1-jre.jar</li>
            <li>/home/rick/.m2/repository/com/google/guava/failureaccess/1.0.1/failureaccess-1.0.1.jar</li>
            <li>/home/rick/.m2/repository/com/google/guava/listenablefuture/9999.0-empty-to-avoid-conflict</li>
            <li>/home/rick/.m2/repository/com/google/code/findbugs/jsr305/3.0.2/jsr305-3.0.2.jar</li>
            <li>/home/rick/.m2/repository/org/checkerframework/checker-qual/3.12.0/checker-qual-3.12.0.jar</li>
            <li>/home/rick/.m2/repository/com/google/errorprone/error_prone_annotations/2.7.1/error_prone_</li>
            <li>/home/rick/.m2/repository/com/google/j2objc/j2objc-annotations/1.3/j2objc-annotations-1.3.</li>
            <li>/home/rick/.m2/repository/com/github/PicnicSupermarket/error-prone/error_prone_annotations</li>
          </ol>
          <div class="hscroll"><span></span></div>
        </div></li>
      </ul>
      <span class="ls-thumb"></span>
      <button class="ls-help">?</button>
    </div>
  </div>
</section>

</main>
</body>
</html>
```
FILE: styles.css
```css
* { box-sizing: border-box; }
body { margin: 0; background: #000; font: 10px/14px "Noto Sans", sans-serif; color: #111; }
h1, h2, h3, p, ul, ol { margin: 0; padding: 0; font-size: inherit; }
ul, ol { list-style: none; }
a { color: inherit; text-decoration: none; }
button { font: inherit; color: inherit; background: none; border: 0; padding: 0; }
svg { display: block; flex: none; width: 12px; height: 12px; }
i, em { font-style: normal; }
.sprite { display: none; }

.desktop { display: grid; grid-template-columns: repeat(3, 1fr); min-height: 100vh; overflow: hidden; }
.screen { display: flex; flex-direction: column; min-width: 0; aspect-ratio: 16 / 9; align-self: start; overflow: hidden; white-space: nowrap; }
.laptop { aspect-ratio: 16 / 10; align-self: end; }

/* Browser chrome */
.browser { flex: 1; min-width: 0; min-height: 0; display: flex; flex-direction: column; background: #353535; color: #eee; }
.tabstrip { height: 24px; flex: none; display: flex; align-items: center; background: #000; }
.tab { position: relative; display: flex; align-items: center; gap: 5px; height: 24px; min-width: 0; padding: 0 7px; }
.tab span { flex: 1; min-width: 0; overflow: hidden; -webkit-mask-image: linear-gradient(to right, #000 60%, transparent); mask-image: linear-gradient(to right, #000 60%, transparent); }
.tab .x { width: 8px; height: 8px; }
.tab::after { content: ""; position: absolute; right: 0; top: 5px; height: 15px; border-right: 1px solid #444; }
.tab.active { background: #353535; border-radius: 7px 7px 0 0; }
.tab.active::after, .tab.last::after { display: none; }
.tab.mailed { box-shadow: inset 0 -2px #ff8b83; }
.tab-wide { width: 171px; margin-left: 6px; padding: 0 8px; gap: 6px; }
.tab-wide span { -webkit-mask-image: none; mask-image: none; }
.newtab { margin-left: 9px; }
.wincontrols { margin-left: auto; display: flex; gap: 13px; padding-right: 8px; }
.wincontrols svg { width: 10px; height: 10px; }
.inactive .wincontrols { color: #666; }
.inactive .wincontrols .bright { color: #aaa; }
.tabs { display: grid; grid-template-columns: repeat(13, 1fr); width: 971px; }
.pinned { display: flex; align-items: center; height: 24px; padding-left: 14px; }
.sep { width: 1px; height: 15px; margin: 0 7px; background: #444; }
.groupdot { position: relative; width: 10px; height: 10px; margin-right: 14px; border-radius: 50%; background: #dadce0; }
.groupdot::after { content: ""; position: absolute; left: 0; right: 0; bottom: -7px; height: 2px; background: #dadce0; }
.group { position: relative; border-radius: 5px; color: #222; height: 17px; line-height: 17px; text-align: center; }
.group::after { content: ""; position: absolute; left: 0; right: 0; bottom: -3px; height: 2px; background: inherit; }
.todo { width: 41px; background: #ff8bcb; }
.mail { width: 35px; background: #ff8b83; margin: 0 3px 0 15px; }
.toolbar { height: 26px; flex: none; display: flex; align-items: center; }
.navbuttons { display: flex; gap: 11px; padding: 0 10px; }
.off { opacity: .5; }
.omnibox { flex: 1; display: flex; align-items: center; height: 21px; padding: 0 8px; border-radius: 11px; background: #202124; color: #9aa0a6; }
.url { flex: 1; min-width: 0; margin-left: 7px; padding: 0; border: 0; outline: 0; font: 10px/14px Roboto, sans-serif; color: transparent; -webkit-background-clip: text; background-clip: text; }
.omnibox > svg:first-child { width: 10px; }
.url-short { background-image: linear-gradient(to right, #fff 49px, #8a8f94 49px); }
.url-long { background-image: linear-gradient(to right, #fff 84px, #8a8f94 84px); }
.act { margin-left: 11px; color: #bbb; }
.extensions { display: flex; align-items: center; gap: 11px; padding: 0 9px 0 10px; }
.ext-badged { position: relative; }
.ext-badged b { position: absolute; left: 7px; top: 5px; width: 9px; height: 9px; border-radius: 2px; background: #174b5f; color: #fff; font: 700 8px/9px "Noto Sans", sans-serif; text-align: center; }
.avatar { width: 16px; height: 16px; margin: 0 -2px; border-radius: 50%; background: #4a34a5; color: #fff; font-size: 9px; line-height: 16px; text-align: center; }
.bookmarks { height: 25px; flex: none; display: flex; align-items: center; gap: 11px; padding: 0 9px; border-bottom: 1px solid #5b5b5b; }
.bookmarks a { display: flex; align-items: center; gap: 6px; }
.viewport { flex: 1; min-height: 0; display: flex; background: #fff; color: #111; }
.scrollbar { flex: none; width: 10px; display: flex; flex-direction: column; align-items: center; background: #f1f1f1; }
.scrollbar i { height: 10px; font-size: 6px; line-height: 10px; color: #888; }
.thumb { width: 8px; background: #c1c1c1; }
.thumb-long { height: 435px; }
.thumb-full { flex: 1; }
.scrollbar .down { margin-top: auto; color: #444; }

/* PayPal */
.paypal { position: relative; flex: 1; min-width: 0; display: flex; flex-direction: column; overflow: hidden; font-size: 12px; line-height: 17px; }
.pp-header { flex: none; height: 68px; padding: 0 20.5% 0 21%; display: flex; align-items: center; background: #003087; color: #cdf1ff; font-size: 11px; }
.pp-logo { width: 17px; height: 20px; margin-right: 18px; }
.pp-nav { display: flex; gap: 8px; }
.pp-nav a { padding: 0 11px; height: 33px; line-height: 33px; border-radius: 17px; }
.pp-nav .on { background: #084593; color: #fff; font-weight: 600; }
.pp-tools { margin-left: auto; display: flex; align-items: center; gap: 17px; font-size: 10px; font-weight: 600; }
.pp-tools svg { width: 14px; height: 14px; }
.pp-body { flex: 1; min-height: 0; display: grid; grid-template-columns: 55% 45%; }
.pp-left { background: #f7f4f0; padding: 21px 17px 0; display: flex; flex-direction: column; align-items: flex-end; }
.pp-left h1 { width: 420px; margin-bottom: 19px; font-size: 29px; line-height: 40px; font-weight: 400; }
.pp-card { width: 420px; border: 1px solid #e6e6e6; border-radius: 8px; background: #fff; overflow: hidden; }
.pp-balance { padding: 16px 17px 17px; }
.pp-row { display: flex; align-items: center; justify-content: space-between; }
.pp-row h2 { line-height: 20px; }
.dots svg { color: #444; }
.pp-amount { margin-top: 3px; font-size: 31px; line-height: 40px; }
.pp-small, .pp-primary, .pp-quick, .pp-account small, .pp-chip, .pp-cookies { font-family: Lato, sans-serif; font-size: 10px; line-height: 14px; }
.pp-small { margin-top: 3px; }
.pp-primary { display: block; margin-top: 17px; height: 23px; padding: 0 11px; border-radius: 12px; background: #003087; color: #fff; }
.pp-ideal { display: flex; gap: 11px; padding: 17px; background: #fafafa; }
.pp-ideal p { font-size: 13px; }
.pp-disc { flex: none; width: 34px; height: 34px; border-radius: 50%; background: #f7f4f0; display: grid; place-items: center; }
.pp-disc svg { width: 22px; height: 22px; }
.pp-link { display: block; color: #0a7cea; font-weight: 700; }
.pp-ideal .pp-link { margin-top: 8px; }
.pp-right { background: #fff; padding: 32px 17px 0; overflow: hidden; }
.pp-right h2.plain { font-weight: 400; }
.pp-quick { display: flex; gap: 35px; margin: 8px 0 29px; }
.pp-quick a { width: 45px; display: block; }
.pp-quick .centred { text-align: center; }
.pp-quick span { width: 45px; height: 45px; margin-bottom: 7px; border-radius: 50%; background: #f7f4f0; display: grid; place-items: center; }
.pp-quick svg { width: 22px; height: 22px; }
.pp-quick .full { width: 26px; height: 26px; }
.pp-activity { margin: 15px 11px 17px; }
.pp-bank-head { margin-top: 39px; width: 285px; }
.pp-account { display: flex; gap: 11px; margin-top: 12px; height: 45px; }
.pp-account + .pp-account { margin-top: 6px; height: 85px; }
.pp-thumb { width: 34px; height: 22px; margin-top: 3px; border-radius: 2px; background: #f7f7f7; display: grid; place-items: center; }
.pp-account + .pp-account .pp-thumb { margin-top: 2px; }
.visa { color: #1a2a6c; font-size: 8px; font-weight: 700; font-style: italic; line-height: 10px; }
.pp-account small { display: block; line-height: 18px; }
.pp-chip { display: block; margin-top: 1px; height: 20px; padding: 0 6px; border-radius: 10px; background: #dcd6cf; }
.pp-charity { margin-top: 121px; }
.pp-cookies { position: absolute; left: 8%; right: 8%; bottom: 23px; height: 71px; padding: 0 57px; display: flex; align-items: center; justify-content: space-between; border-radius: 8px; background: #fff; box-shadow: 0 8px 24px rgba(0, 0, 0, .22); }
.pp-cookies a { color: #0070ba; text-decoration: underline; }
.pp-cookies div { display: grid; gap: 5px; }
.pp-cookies button { width: 87px; height: 23px; border: 1px solid #0070ba; border-radius: 12px; color: #0070ba; font-weight: 700; }

/* Ubuntu shell */
.panel { position: relative; flex: none; height: 19px; display: flex; align-items: center; background: #1d1d1d; color: #ddd; }
.activities { margin-left: 9px; }
.appmenu { display: flex; align-items: center; gap: 5px; margin-left: 26px; }
.appmenu i { font-size: 8px; }
.panel time { position: absolute; left: 50%; }
.tray { margin-left: auto; margin-right: 10px; display: flex; align-items: center; gap: 8px; }
.tray .gap { margin-left: 11px; }
.tray .small { width: 8px; height: 8px; }
.session { flex: 1; min-height: 0; display: flex; }
.dock { flex: none; width: 51px; padding: 2px 3px; display: flex; flex-direction: column; align-items: center; gap: 2px; background: linear-gradient(#4a2026, #3b1a2a 25%, #30182e 50%, #22141f); border-left: 1px solid #1d1d1d; }
.dock a { position: relative; width: 45px; height: 46px; border-radius: 4px; display: grid; place-items: center; }
.dock a.on { background: rgba(255, 255, 255, .2); }
.dock svg { width: 34px; height: 34px; }
.run { position: absolute; left: 0; top: 0; bottom: 0; display: flex; flex-direction: column; justify-content: center; gap: 2px; }
.run b { width: 4px; height: 4px; border-radius: 50%; background: #e95420; }
.appgrid { margin: auto 0 11px; }
.appgrid svg { width: 22px; height: 22px; }

/* Bahn booking */
.bahn { flex: 1; min-width: 0; background: #cdcdcd; color: #282d37; display: flex; justify-content: center; }
.db-column { width: 697px; background: #eef2f5; font-size: 12px; line-height: 17px; }
.db-header { box-shadow: 0 1px 8px rgba(0, 0, 0, .4); clip-path: inset(0 -10px -10px); }
.db-header nav { height: 23px; padding: 0 36px; display: flex; justify-content: flex-end; gap: 17px; font-size: 9px; line-height: 20px; }
.db-brand { height: 61px; padding: 0 17px; display: flex; align-items: center; justify-content: space-between; background: #fff; }
.db-logo { width: 43px; height: 30px; }
.db-user { display: flex; align-items: flex-end; gap: 9px; padding-bottom: 2px; border-bottom: 2px solid #f01414; font-weight: 700; font-size: 11px; line-height: 13px; width: 91px; }
.db-user svg { width: 10px; height: 12px; margin-bottom: 2px; }
.db-card { margin: 0 14px; border-radius: 3px; background: #fff; }
.db-success { margin-top: 23px; padding: 31px 0 25px; display: flex; flex-direction: column; align-items: center; text-align: center; }
.db-success > svg { width: 33px; height: 36px; }
.db-success h3 { display: flex; align-items: center; gap: 9px; margin: 8px 0; }
.db-success .muted { margin-top: 11px; font-size: 10px; line-height: 15px; color: #8c949e; }
.db-column h2 { margin: 17px 14px 11px; font-size: 13px; line-height: 20px; font-weight: 400; }
.db-options { display: grid; grid-template-columns: repeat(3, 1fr); height: 168px; padding: 17px 14px 0; font-size: 10px; line-height: 13px; text-align: center; }
.db-options > div { display: flex; flex-direction: column; align-items: center; }
.db-options div > svg { width: 34px; height: 40px; margin-bottom: 17px; }
.db-options button { margin-top: 23px; height: 31px; width: 130px; border: 1px solid #646973; border-radius: 3px; font-size: 11px; }
.checks svg { width: 11px; height: 11px; }
.checks li { display: flex; align-items: center; gap: 9px; }
.db-options .checks { align-self: stretch; margin: 15px 13px 0; line-height: 19px; }
.db-bring { display: flex; align-items: center; gap: 17px; height: 82px; padding: 0 32px; }
.db-bring > svg { width: 40px; height: 27px; margin-bottom: 10px; }
.db-bring .checks { display: grid; gap: 9px; font-size: 10px; line-height: 14px; }
.db-bring li { align-items: flex-start; }
.db-bring li svg { margin-top: 3px; }

/* Logseq */
.titlebar { position: relative; flex: none; height: 27px; display: grid; place-items: center; background: #3d3d3d; border-top: 1px solid #555; border-bottom: 1px solid #2a2a2a; color: #a0a0a0; font-size: 10px; }
.wm { position: absolute; right: 6px; display: flex; align-items: center; gap: 14px; color: #777; }
.wm svg { width: 9px; height: 9px; }
.wm .wm-close { width: 14px; height: 14px; padding: 3px; border-radius: 50%; background: #666; color: #ccc; }
.logseq { flex: 1; min-height: 0; display: flex; background: #002b36; color: #93a8a9; font: 10px/20px Inter, sans-serif; }
.ls-side { flex: none; width: 175px; display: flex; flex-direction: column; background: #023643; }
.ls-side svg { color: #58868c; }
.ls-tools { display: flex; align-items: center; gap: 10px; height: 36px; padding-left: 17px; flex: none; }
.ls-nav a { display: flex; align-items: center; gap: 6px; height: 28px; padding: 0 26px 0 17px; font-weight: 500; color: #9db0b0; }
.ls-nav i { color: #58868c; }
.ls-nav em { margin-left: auto; font-weight: 400; }
.ls-side h2 { display: flex; align-items: center; gap: 6px; margin: 11px 0 1px 17px; font-size: 8px; font-weight: 500; text-transform: uppercase; color: #58868c; }
.ls-pages a { display: flex; align-items: center; gap: 3px; padding-left: 18px; }
.ls-pages svg { width: 10px; height: 10px; color: #93a8a9; }
.ls-new { display: flex; align-items: center; gap: 6px; height: 26px; margin: auto 10px 8px; padding-left: 7px; border-radius: 4px; background: #002b36; font-weight: 500; }
.ls-main { position: relative; flex: 1; min-width: 0; }
.ls-head { display: flex; align-items: center; justify-content: flex-end; gap: 11px; height: 35px; margin-bottom: 17px; padding-right: 17px; color: #58868c; }
.outline { display: flex; flex-direction: column; gap: 4px; font-size: 11px; line-height: 17px; }
.ls-main > .outline { width: 582px; margin: 0 auto; }
.outline > li { position: relative; display: flex; }
.outline > li::before { content: ""; flex: none; width: 5px; height: 5px; margin: 6px 8px; border-radius: 50%; background: #5f8f92; }
.nested { margin: 2px 0 0; }
.nested::before { content: ""; position: absolute; left: 10px; top: 18px; bottom: 0; border-left: 1px solid #0f4a58; }
.apart { margin-top: 20px; }
.far { margin-top: 40px; }
.outline code { padding: 2px 4px; border-radius: 3px; background: #00222b; font: 10px/1 "Liberation Mono", monospace; color: #708b8f; }
.title h2 { flex: 1; margin-right: 9px; padding-top: 5px; border-bottom: 1px solid #0f4a58; font-size: 16px; line-height: 26px; font-weight: 600; }
.outline > .title::before { margin-top: 14px; }
.codeblock { flex: 1; min-width: 0; overflow: hidden; padding-top: 15px; height: 229px; display: flex; flex-direction: column; justify-content: space-between; background: linear-gradient(to right, #073642 22px, transparent 22px); font: 10px/16px "Liberation Mono", monospace; color: #51717a; }
.codeblock ol { height: 196px; display: flex; flex-direction: column; justify-content: space-between; counter-reset: line; }
.codeblock li { counter-increment: line; }
.codeblock li::before { content: counter(line); display: inline-block; width: 18px; margin-right: 8px; text-align: right; color: #3c5b65; }
.codeblock i { display: inline-block; width: 5px; height: 8px; margin-right: 1px; border: 1px solid #24454e; }
.hscroll { margin-left: 22px; height: 6px; background: #052f3b; }
.hscroll span { display: block; width: 230px; height: 6px; background: #12505d; }
.ls-thumb { position: absolute; right: 0; top: 529px; width: 4px; height: 258px; background: #12505d; }
.ls-help { position: absolute; right: 23px; bottom: 11px; width: 23px; height: 23px; border-radius: 50%; background: #023643; font-weight: 700; }
```
